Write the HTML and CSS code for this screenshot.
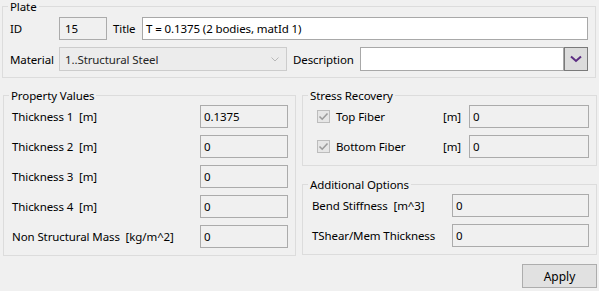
FILE: index.html
```html
<html lang="en">

<head>
  <meta charset="UTF-8">
  <meta name="viewport" content="width=device-width, initial-scale=1.0">
  <title>Plate</title>
  <link rel="stylesheet" href="styles.css">
</head>

<body>
  <fieldset class="group plate">
    <legend>Plate</legend>
    <div class="line">
      <span class="lbl lbl-first">ID</span>
      <div class="box id-box">15</div>
      <span class="lbl lbl-title">Title</span>
      <div class="box edit grow">T = 0.1375 (2 bodies, matId 1)</div>
    </div>
    <div class="line line-second">
      <span class="lbl lbl-first">Material</span>
      <div class="combo">
        <span>1..Structural Steel</span>
        <svg width="8" height="5" viewBox="0 0 8 5"><path d="M0.5 0.5 L4 4 L7.5 0.5" fill="none" stroke="#b8b8b8" stroke-width="1" /></svg>
      </div>
      <span class="lbl lbl-desc">Description</span>
      <div class="box edit grow"></div>
      <div class="drop-btn">
        <svg width="12" height="8" viewBox="0 0 12 8"><path d="M1 1.5 L6 6 L11 1.5" fill="none" stroke="#5c2d82" stroke-width="2" /></svg>
      </div>
    </div>
  </fieldset>

  <div class="columns">
    <fieldset class="group props">
      <legend>Property Values</legend>
      <div class="prop-row"><span class="lbl">Thickness 1&nbsp;&nbsp;[m]</span><div class="box val">0.1375</div></div>
      <div class="prop-row"><span class="lbl">Thickness 2&nbsp;&nbsp;[m]</span><div class="box val">0</div></div>
      <div class="prop-row"><span class="lbl">Thickness 3&nbsp;&nbsp;[m]</span><div class="box val">0</div></div>
      <div class="prop-row"><span class="lbl">Thickness 4&nbsp;&nbsp;[m]</span><div class="box val">0</div></div>
      <div class="prop-row"><span class="lbl">Non Structural Mass&nbsp;&nbsp;[kg/m^2]</span><div class="box val">0</div></div>
    </fieldset>

    <div class="right-col">
      <fieldset class="group stress">
        <legend>Stress Recovery</legend>
        <div class="fiber-row">
          <span class="check"><svg width="11" height="11" viewBox="0 0 11 11"><path d="M1.5 5.5 L4.2 8.2 L9.5 2.5" fill="none" stroke="#9b9b9b" stroke-width="1.6" /></svg></span>
          <span class="lbl fiber-name">Top Fiber</span>
          <span class="lbl unit">[m]</span>
          <div class="box grow">0</div>
        </div>
        <div class="fiber-row">
          <span class="check"><svg width="11" height="11" viewBox="0 0 11 11"><path d="M1.5 5.5 L4.2 8.2 L9.5 2.5" fill="none" stroke="#9b9b9b" stroke-width="1.6" /></svg></span>
          <span class="lbl fiber-name">Bottom Fiber</span>
          <span class="lbl unit">[m]</span>
          <div class="box grow">0</div>
        </div>
      </fieldset>

      <fieldset class="group options">
        <legend>Additional Options</legend>
        <div class="opt-row"><span class="lbl opt-name">Bend Stiffness&nbsp;&nbsp;[m^3]</span><div class="box grow">0</div></div>
        <div class="opt-row"><span class="lbl opt-name">TShear/Mem Thickness</span><div class="box grow">0</div></div>
      </fieldset>
    </div>
  </div>

  <div class="actions">
    <button class="apply">Apply</button>
  </div>
</body>

</html>
```

FILE: styles.css
```css
body {
  margin: 0;
  width: 599px;
  height: 291px;
  overflow: hidden;
  background-color: #f0f0f0;
  font-family: "Segoe UI", "Noto Sans", sans-serif;
  font-size: 11.5px;
  letter-spacing: -0.1px;
  color: #000;
}

.group {
  margin: 0;
  border: 1px solid #dcdcdc;
  min-width: 0;
  padding-left: 5px;
}

.group legend {
  padding: 0 2px;
  margin-left: 0;
  line-height: 13px;
  height: 13px;
}

.plate {
  margin: 0 3px 0 2px;
  padding-top: 4px;
  padding-right: 7px;
  padding-bottom: 6px;
}

.line {
  display: flex;
  align-items: center;
  height: 23px;
  padding-left: 2px;
}

.line-second {
  margin-top: 7px;
  height: 24px;
}

.lbl {
  white-space: nowrap;
}

.lbl-first {
  width: 49px;
}

.lbl-title {
  width: 29px;
  margin-left: 6px;
}

.lbl-desc {
  width: 67px;
  margin-left: 6px;
}

.box {
  box-sizing: border-box;
  height: 23px;
  line-height: 21px;
  border: 1px solid #ababab;
  background-color: #f0f0f0;
  padding: 0 3px;
  white-space: nowrap;
  overflow: hidden;
}

.edit {
  background-color: #fff;
  border-color: #a8a8a8;
}

.grow {
  flex: 1;
}

.id-box {
  width: 48px;
  padding-left: 5px;
}

.line-second .box {
  height: 24px;
  line-height: 22px;
}

.combo {
  box-sizing: border-box;
  width: 228px;
  height: 24px;
  border: 1px solid #cccccc;
  background-color: #ececec;
  display: flex;
  align-items: center;
  justify-content: space-between;
  padding: 0 7px 0 5px;
  color: #262626;
}

.drop-btn {
  box-sizing: border-box;
  width: 24px;
  height: 24px;
  border: 1px solid #7a7a7a;
  background-color: #dcdcdc;
  display: flex;
  align-items: center;
  justify-content: center;
}

.columns {
  display: flex;
  margin: 11px 2px 0 3px;
  gap: 6px;
}

.props {
  width: 293px;
  box-sizing: border-box;
  padding-top: 3px;
  padding-right: 7px;
  padding-bottom: 7px;
}

.prop-row {
  display: flex;
  justify-content: space-between;
  align-items: center;
  height: 23px;
  margin-bottom: 7px;
  padding-left: 3px;
}

.prop-row:last-child {
  margin-bottom: 0;
}

.val {
  width: 88px;
}

.right-col {
  flex: 1;
  display: flex;
  flex-direction: column;
}

.stress {
  padding-top: 3px;
  padding-right: 7px;
  padding-bottom: 7px;
}

.fiber-row {
  display: flex;
  align-items: center;
  height: 23px;
  margin-bottom: 7px;
  padding-left: 9px;
}

.fiber-row:last-child {
  margin-bottom: 0;
}

.check {
  box-sizing: border-box;
  width: 13px;
  height: 13px;
  border: 1px solid #bcbcbc;
  background-color: #e6e6e6;
  display: flex;
  align-items: center;
  justify-content: center;
  margin-right: 6px;
}

.fiber-name {
  width: 107px;
}

.unit {
  width: 26px;
}

.options {
  margin-top: 12px;
  padding-top: 3px;
  padding-right: 7px;
  padding-bottom: 7px;
}

.opt-row {
  display: flex;
  align-items: center;
  height: 23px;
  margin-bottom: 7px;
  padding-left: 4px;
}

.opt-row:last-child {
  margin-bottom: 0;
}

.opt-name {
  width: 140px;
}

.actions {
  display: flex;
  justify-content: flex-end;
  margin: 8px 2px 0 0;
}

.apply {
  width: 75px;
  height: 24px;
  font-family: inherit;
  font-size: 12px;
  color: #000;
  background-color: #e1e1e1;
  border: 1px solid #adadad;
  padding: 0;
}
```
